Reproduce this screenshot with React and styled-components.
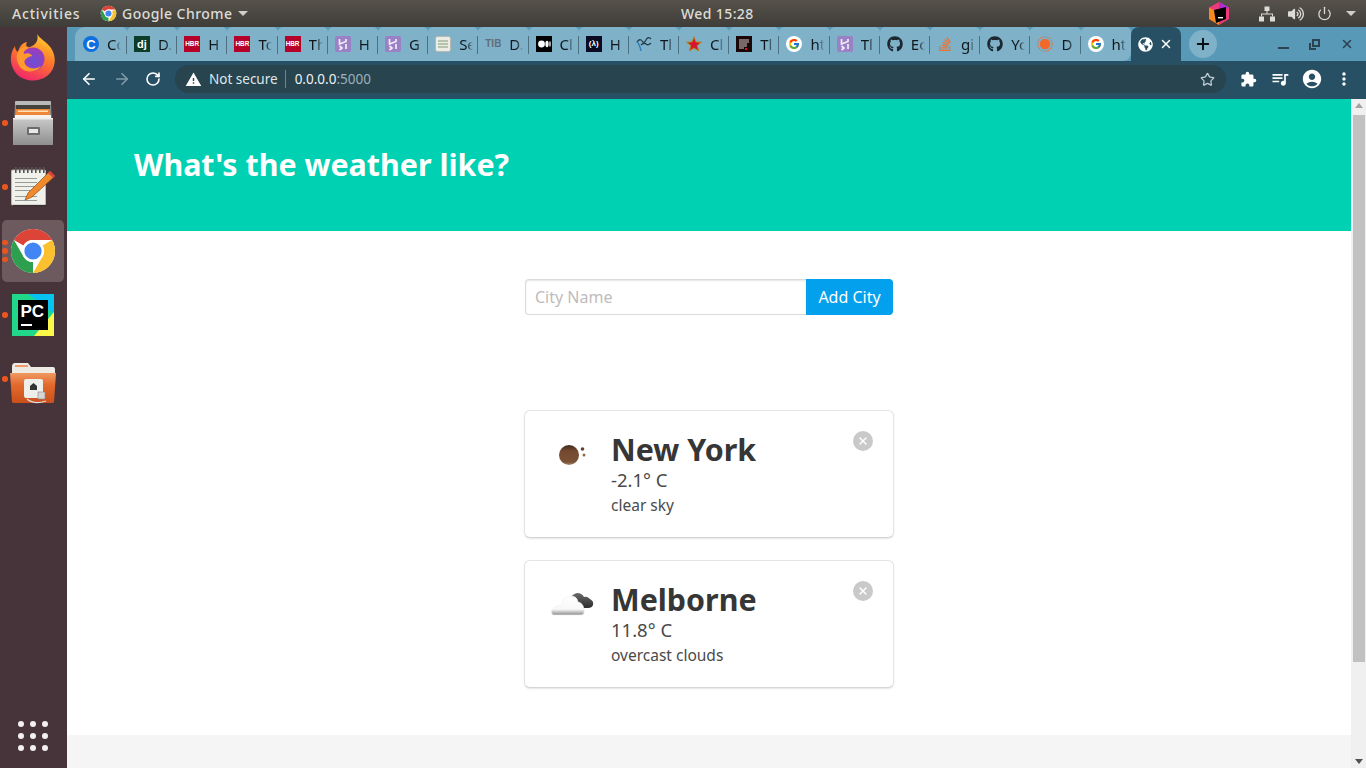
import React from "react";
import styled, { createGlobalStyle } from "styled-components";
import { ArrowLeft, ArrowRight, RotateCw, Star, Plus, X, Power } from "lucide-react";
import { FaGithub, FaStackOverflow, FaGlobeAmericas, FaVolumeUp } from "react-icons/fa";
import { FcGoogle } from "react-icons/fc";
import { MdExtension, MdQueueMusic, MdAccountCircle, MdMoreVert, MdWarning } from "react-icons/md";

const UI_FONT = `"Noto Sans", "Open Sans", sans-serif`;

const GlobalStyle = createGlobalStyle`
  html, body { margin: 0; padding: 0; height: 768px; overflow: hidden; }
  * { box-sizing: border-box; }
  body { font-family: ${UI_FONT}; color: #4a4a4a; }
`;

function ChromeLogo({ size }) {
  const sector = "M4.95 13 A22 22 0 0 1 43.05 13 H24 A11 11 0 0 0 14.47 18.5 Z";
  return (
    <svg width={size} height={size} viewBox="0 0 48 48">
      <circle cx="24" cy="24" r="22" fill="#fff" />
      <path d={sector} fill="#db4437" />
      <path d={sector} fill="#fbc02d" transform="rotate(120 24 24)" />
      <path d={sector} fill="#2e9e4f" transform="rotate(240 24 24)" />
      <circle cx="24" cy="24" r="11" fill="#fff" />
      <circle cx="24" cy="24" r="8.6" fill="#4285f4" />
    </svg>
  );
}

function FirefoxLogo() {
  return (
    <svg width="46" height="48" viewBox="0 2 46 48" overflow="visible">
      <defs>
        <linearGradient id="ffbody" x1="0.7" y1="0" x2="0.3" y2="1">
          <stop offset="0" stopColor="#ffd02e" />
          <stop offset="0.45" stopColor="#ff7a2a" />
          <stop offset="1" stopColor="#f0246c" />
        </linearGradient>
        <radialGradient id="ffglobe" cx="0.55" cy="0.6" r="0.6">
          <stop offset="0" stopColor="#6a4fd8" />
          <stop offset="1" stopColor="#a23bb5" />
        </radialGradient>
      </defs>
      <path d="M27 1 C30 6 37 9 41 15 C47 24 46 36 37 43 C28 50 12 49 5 39 C-1 30 0 20 5 13 C5 16 6 18 8 19 C9 14 12 10 17 9 C15 13 17 15 20 14 C26 12 29 7 27 1 Z" fill="url(#ffbody)" />
      <circle cx="23" cy="26" r="11.5" fill="url(#ffglobe)" />
      <path d="M7 21 C9 15 15 12 19 14 C15 16 13 19 14 21 C17 19 22 21 22 23 C17 24 13 27 15 31 C18 36 26 37 31 33 C27 39 16 41 10 34 C7 30 6 25 7 21 Z" fill="#ff9a2e" />
    </svg>
  );
}

function CabinetIcon() {
  return (
    <svg width="42" height="46" viewBox="0 0 42 46">
      <defs>
        <linearGradient id="cabfront" x1="0" y1="0" x2="0" y2="1">
          <stop offset="0" stopColor="#c9c9c9" />
          <stop offset="1" stopColor="#8f8f8f" />
        </linearGradient>
      </defs>
      <path d="M3 3 Q3 1 5 1 H37 Q39 1 39 3 L41 44 Q41 45 40 45 H2 Q1 45 1 44 Z" fill="#8a8a8a" />
      <rect x="3" y="1" width="36" height="4" rx="1" fill="#b9b9b9" />
      <rect x="4" y="5" width="34" height="15" fill="#45413d" />
      <rect x="4" y="9" width="34" height="6" fill="#ee8836" />
      <rect x="6" y="10.5" width="30" height="1.5" fill="#fde1b8" />
      <rect x="3" y="15" width="36" height="3" fill="#f6f3ee" />
      <rect x="1" y="18" width="40" height="27" rx="1" fill="url(#cabfront)" />
      <rect x="1" y="18" width="40" height="1.5" fill="#ececec" />
      <rect x="15" y="27" width="13" height="8" rx="1" fill="#6c6c6c" />
      <rect x="17" y="29" width="9" height="4" fill="#e8e8e8" />
    </svg>
  );
}

function NotesIcon() {
  return (
    <svg width="46" height="40" viewBox="0 0 46 40">
      <rect x="1.5" y="3" width="34" height="35" rx="1" fill="#f1f1ec" stroke="#b9b9b4" />
      <rect x="3" y="38" width="33" height="1.6" fill="#3a3030" />
      {[5, 9, 13, 17, 21, 25, 29, 33].map((x) => (
        <rect key={x} x={x} y="0" width="1.6" height="6" fill="#555" />
      ))}
      {[11, 15, 19, 23, 29, 33].map((y) => (
        <rect key={y} x="5" y={y} width={y % 2 ? 22 : 16} height="1" fill="#9a9a96" />
      ))}
      <path d="M40 4 L45 9 L22 30 L15 33 L18 26 Z" fill="#f08a2c" stroke="#8b4a12" strokeWidth="0.7" />
      <path d="M40 4 L45 9 L43 11 L38 6 Z" fill="#d8434a" />
    </svg>
  );
}

function PyCharmIcon() {
  return (
    <svg width="42" height="42" viewBox="0 0 42 42">
      <rect width="42" height="42" fill="#21d789" />
      <path d="M16 0 H42 V20 Z" fill="#07c3f2" />
      <path d="M42 18 V42 H22 Z" fill="#fcf84a" />
      <rect x="6" y="6" width="30" height="30" fill="#000" />
      <text x="8.5" y="23" fontFamily="Liberation Sans, sans-serif" fontWeight="700" fontSize="17" fill="#fff">PC</text>
      <rect x="9" y="30" width="11" height="2" fill="#fff" />
    </svg>
  );
}

function FolderIcon() {
  return (
    <svg width="46" height="42" viewBox="0 -4 46 42" overflow="visible">
      <defs>
        <linearGradient id="folderfill" x1="0" y1="0" x2="0" y2="1">
          <stop offset="0" stopColor="#f09a62" />
          <stop offset="0.4" stopColor="#e3692c" />
          <stop offset="1" stopColor="#c9501c" />
        </linearGradient>
      </defs>
      <path d="M2 5 Q2 1 5 1 H18 L21 5 H43 Q45 5 45 7 V14 H2 Z" fill="#eeeae4" />
      <rect x="5" y="3" width="13" height="2" fill="#ee9c6c" />
      <path d="M0 11 H46 L44 40 Q44 41 42 41 H4 Q2 41 2 40 Z" fill="url(#folderfill)" />
      <rect x="14" y="17" width="19" height="19" rx="2" fill="#eeeeea" />
      <path d="M20 28 V24 L23.5 21 L27 24 V28 Z" fill="#333" />
      <rect x="28" y="30" width="7" height="7" fill="#d6d6d6" stroke="#888" strokeWidth="0.6" />
      <path d="M17 37 Q24 43 36 39" fill="none" stroke="#ddd" strokeWidth="1.2" />
    </svg>
  );
}

function MoonIcon() {
  return (
    <svg width="28" height="22" viewBox="0 0 28 22">
      <defs>
        <linearGradient id="moonfill" x1="0" y1="0" x2="0" y2="1">
          <stop offset="0" stopColor="#3f2a1e" />
          <stop offset="0.3" stopColor="#74492f" />
          <stop offset="0.85" stopColor="#7a5236" />
          <stop offset="1" stopColor="#a5856c" />
        </linearGradient>
      </defs>
      <circle cx="11" cy="12" r="10" fill="url(#moonfill)" />
      <circle cx="24.5" cy="6" r="1.8" fill="#5f4230" />
      <circle cx="26" cy="12" r="1.5" fill="#8f6a4c" />
    </svg>
  );
}

function OvercastIcon() {
  return (
    <svg width="44" height="26" viewBox="0 0 44 26">
      <defs>
        <linearGradient id="cloudlight" x1="0" y1="0" x2="0" y2="1">
          <stop offset="0" stopColor="#ffffff" />
          <stop offset="0.7" stopColor="#f8f8f8" />
          <stop offset="1" stopColor="#8a8a8a" />
        </linearGradient>
        <linearGradient id="clouddark" x1="0" y1="0" x2="0" y2="1">
          <stop offset="0" stopColor="#6a6a6a" />
          <stop offset="1" stopColor="#2c2c2c" />
        </linearGradient>
      </defs>
      <path d="M20 10 Q21 3 27 2 Q32 2 34 6 Q37 5 40 8 Q44 10 43 14 Q42 17 38 17 H24 Z" fill="url(#clouddark)" />
      <path d="M3 24 Q-1 20 4 17 Q7 14 11 15 Q13 5 21 5 Q27 5 28 11 Q33 12 34 18 Q35 24 31 24 Z" fill="url(#cloudlight)" stroke="#efefef" strokeWidth="0.7" />
    </svg>
  );
}

function Heroku() {
  return (
    <svg width="16" height="16" viewBox="0 0 16 16">
      <rect width="16" height="16" rx="2" fill="#9a80c4" />
      <path d="M4.5 3 V8 L11 5.5 V3 M11 8 V13 M4.5 10 L7 12 L4.5 14" fill="none" stroke="#f1ecf8" strokeWidth="1.7" />
    </svg>
  );
}

const LabelBox = styled.span`
  width: 16px;
  height: 16px;
  display: flex;
  align-items: center;
  justify-content: center;
  flex: none;
  overflow: hidden;
  font-family: "Liberation Sans", sans-serif;
  font-weight: 700;
  line-height: 1;
  white-space: nowrap;
  border-radius: ${(p) => (p.$round ? "50%" : "0")};
  background: ${(p) => p.$bg || "transparent"};
  color: ${(p) => p.$fg || "#fff"};
  font-size: ${(p) => p.$size || 9}px;
`;

function Favicon({ kind }) {
  switch (kind) {
    case "coursera":
      return <LabelBox $round $bg="#0f6fde" $size={13}>C</LabelBox>;
    case "django":
      return <LabelBox $bg="#0c3c2a" $size={11}>dj</LabelBox>;
    case "hbr":
      return <LabelBox $bg="#b5002a" $size={6.4}>HBR</LabelBox>;
    case "heroku":
      return <Heroku />;
    case "doc":
      return (
        <svg width="16" height="16" viewBox="0 0 16 16">
          <rect x="0.5" y="0.5" width="15" height="15" rx="2" fill="#ecece6" stroke="#b8b8b0" />
          <path d="M3 5 H13 M3 8 H13 M3 11 H13" stroke="#7f9a72" strokeWidth="1.2" />
        </svg>
      );
    case "tib":
      return <LabelBox $fg="#5f6f79" $size={10}>TIB</LabelBox>;
    case "medium":
      return (
        <svg width="16" height="16" viewBox="0 0 16 16">
          <rect width="16" height="16" fill="#000" />
          <circle cx="5.5" cy="8" r="3.4" fill="#fff" />
          <ellipse cx="11" cy="8" rx="1.6" ry="3.2" fill="#fff" />
          <ellipse cx="14" cy="8" rx="0.7" ry="2.9" fill="#fff" />
        </svg>
      );
    case "fcc":
      return <LabelBox $bg="#0a0a23" $size={8}>(λ)</LabelBox>;
    case "wave":
      return (
        <svg width="16" height="16" viewBox="0 0 16 16" fill="none">
          <path d="M1 6 Q4 2 6 5 T10 4 T15 3" stroke="#27424f" strokeWidth="1.3" />
          <path d="M5 9 Q8 6 10 8 T15 7" stroke="#27424f" strokeWidth="1.3" />
          <path d="M1 6 Q4 9 5 15" stroke="#2a7fb8" strokeWidth="1.4" />
        </svg>
      );
    case "star":
      return (
        <svg width="16" height="16" viewBox="0 0 16 16">
          <path d="M8 .8 L10 6 L15.5 6.2 L11.2 9.6 L12.7 15 L8 12 L3.3 15 L4.8 9.6 L.5 6.2 L6 6 Z" fill="#d8152f" stroke="#b08a1e" strokeWidth="1" />
        </svg>
      );
    case "make":
      return (
        <svg width="16" height="16" viewBox="0 0 16 16">
          <rect width="16" height="16" fill="#1b0608" />
          <path d="M3 4 H13 M3 6 H13 M3 8 H11 M3 10 H11 M3 12 H8" stroke="#d8caca" strokeWidth="1" />
          <rect x="9" y="12" width="2" height="2" fill="#d8152f" />
        </svg>
      );
    case "google":
      return (
        <GoogleBadge>
          <FcGoogle size={12} />
        </GoogleBadge>
      );
    case "github":
      return <FaGithub size={16} color="#1d2730" />;
    case "so":
      return <FaStackOverflow size={16} color="#f0702c" />;
    case "sun":
      return (
        <svg width="16" height="16" viewBox="0 0 16 16">
          <circle cx="8" cy="8" r="5.2" fill="#f4682a" />
          <circle cx="8" cy="8" r="7.2" fill="none" stroke="#f4682a" strokeWidth="1.2" strokeDasharray="1.2 1.2" />
        </svg>
      );
    default:
      return null;
  }
}

const TABS = [
  ["coursera", "Cc"], ["django", "D."], ["hbr", "H"], ["hbr", "To"], ["hbr", "Th"],
  ["heroku", "H"], ["heroku", "G"], ["doc", "Se"], ["tib", "D."], ["medium", "Cl"],
  ["fcc", "H"], ["wave", "Tl"], ["star", "Cl"], ["make", "Tl"], ["google", "ht"],
  ["heroku", "Tl"], ["github", "Ec"], ["so", "gi"], ["github", "Yc"], ["sun", "D"],
  ["google", "ht"],
];

const CITIES = [
  { name: "New York", temp: "-2.1° C", desc: "clear sky", Icon: MoonIcon },
  { name: "Melborne", temp: "11.8° C", desc: "overcast clouds", Icon: OvercastIcon },
];

const DOCK = [
  { id: "firefox", node: <FirefoxLogo />, dots: 0 },
  { id: "files", node: <CabinetIcon />, dots: 1 },
  { id: "notes", node: <NotesIcon />, dots: 1 },
  { id: "chrome", node: <ChromeLogo size={48} />, dots: 3, active: true },
  { id: "pycharm", node: <PyCharmIcon />, dots: 1 },
  { id: "folder", node: <FolderIcon />, dots: 1 },
];

export default function App() {
  return (
    <Desktop>
      <GlobalStyle />
      <TopBar>
        <TopLeft>
          <Activities>Activities</Activities>
          <AppMenu>
            <ChromeLogo size={17} />
            <span>Google Chrome</span>
            <Caret />
          </AppMenu>
        </TopLeft>
        <Clock>Wed 15:28</Clock>
        <TopRight>
          <svg width="20" height="23" viewBox="0 0 20 23">
            <path d="M10 0 L20 5.5 V17 L10 23 L0 17 V5.5 Z" fill="#ee3a7a" />
            <path d="M0 5.5 L10 11 V23 L0 17 Z" fill="#f58a1f" />
            <path d="M10 0 L20 5.5 L10 11 Z" fill="#b02fd0" />
            <path d="M5 8 L17 5 V17 L7 21 Z" fill="#000" />
            <rect x="9" y="15" width="5" height="1.4" fill="#fff" />
          </svg>
          <TrayGroup>
            <svg width="16" height="16" viewBox="0 0 16 16" fill="#dcdcd6">
              <rect x="5.5" y="0.5" width="5" height="4.5" />
              <rect x="0" y="10.5" width="5" height="5" />
              <rect x="11" y="10.5" width="5" height="5" />
              <path d="M7.5 5 H8.5 V7.5 H14 V10.5 H13 V8.5 H3 V10.5 H2 V7.5 H7.5 Z" />
            </svg>
            <FaVolumeUp size={16} color="#dcdcd6" />
            <Power size={15} color="#dcdcd6" strokeWidth={2} />
            <Caret />
          </TrayGroup>
        </TopRight>
      </TopBar>
      <Workspace>
        <Dock>
          {DOCK.map((item) => (
            <DockItem key={item.id}>
              <DockTile $active={item.active}>{item.node}</DockTile>
              {item.dots > 0 && (
                <DotColumn>
                  {Array.from({ length: item.dots }).map((_, i) => (
                    <RunDot key={i} />
                  ))}
                </DotColumn>
              )}
            </DockItem>
          ))}
          <AppGrid>
            {Array.from({ length: 9 }).map((_, i) => (
              <GridDot key={i} />
            ))}
          </AppGrid>
        </Dock>
        <Browser>
          <TabStrip>
            {TABS.map(([kind, title], i) => (
              <Tab key={i} $first={i === 0} $last={i === TABS.length - 1}>
                <Favicon kind={kind} />
                <TabTitle>{title}</TabTitle>
              </Tab>
            ))}
            <ActiveTab>
              <FaGlobeAmericas size={15} color="#fff" />
              <X size={14} color="#fff" strokeWidth={2.5} />
            </ActiveTab>
            <NewTab>
              <Plus size={18} color="#0a0f12" strokeWidth={2.6} />
            </NewTab>
            <WindowButtons>
              <MinimizeGlyph />
              <svg width="11" height="11" viewBox="0 0 11 11" fill="none" stroke="#2c4452" strokeWidth="2">
                <rect x="4" y="1" width="6" height="6" />
                <path d="M1 4 V10 H7" />
              </svg>
              <X size={14} color="#2c4452" strokeWidth={2.8} />
            </WindowButtons>
          </TabStrip>
          <Toolbar>
            <NavButtons>
              <ArrowLeft size={18} color="#fff" strokeWidth={2.2} />
              <ArrowRight size={18} color="#7f9aa8" strokeWidth={2.2} />
              <RotateCw size={16} color="#fff" strokeWidth={2.4} />
            </NavButtons>
            <Omnibox>
              <SecurityChip>
                <MdWarning size={17} color="#fff" />
                <span>Not secure</span>
              </SecurityChip>
              <Address>
                0.0.0.0<AddressPort>:5000</AddressPort>
              </Address>
              <Star size={15} color="#c4d0d6" strokeWidth={2} />
            </Omnibox>
            <ToolButtons>
              <ToolButton><MdExtension size={17} color="#fff" /></ToolButton>
              <ToolButton><MdQueueMusic size={20} color="#fff" /></ToolButton>
              <ToolButton><MdAccountCircle size={22} color="#fff" /></ToolButton>
              <ToolButton><MdMoreVert size={20} color="#fff" /></ToolButton>
            </ToolButtons>
          </Toolbar>
          <Viewport>
            <Page>
              <Hero>
                <HeroTitle>What's the weather like?</HeroTitle>
              </Hero>
              <Section>
                <CityForm>
                  <CityInput placeholder="City Name" />
                  <AddButton>Add City</AddButton>
                </CityForm>
                <CardList>
                  {CITIES.map(({ name, temp, desc, Icon }) => (
                    <Card key={name}>
                      <IconCell>
                        <Icon />
                      </IconCell>
                      <CardBody>
                        <CityTitle>{name}</CityTitle>
                        <Temperature>{temp}</Temperature>
                        <Description>{desc}</Description>
                      </CardBody>
                      <DeleteButton>
                        <X size={12} color="#fff" strokeWidth={3} />
                      </DeleteButton>
                    </Card>
                  ))}
                </CardList>
              </Section>
              <Footer />
            </Page>
            <Scrollbar>
              <ScrollArrow $up />
              <ScrollThumb />
              <ScrollArrow />
            </Scrollbar>
          </Viewport>
        </Browser>
      </Workspace>
    </Desktop>
  );
}

const Desktop = styled.div`
  width: 1366px;
  height: 768px;
  display: flex;
  flex-direction: column;
  overflow: hidden;
  background: #fff;
`;

const TopBar = styled.header`
  height: 27px;
  flex: none;
  display: grid;
  grid-template-columns: 681px auto 1fr;
  align-items: center;
  background: linear-gradient(#56524b, #3f3d39);
  color: #dcdcd6;
  font-size: 14px;
  font-weight: 500;
`;

const TopLeft = styled.div`
  display: flex;
  align-items: center;
  padding-left: 12px;
`;

const Activities = styled.span`
  width: 88px;
  letter-spacing: 0.8px;
`;

const AppMenu = styled.div`
  display: flex;
  align-items: center;
  gap: 5px;
  letter-spacing: 0.45px;
`;

const Caret = styled.i`
  display: block;
  margin-left: 1px;
  border-left: 5px solid transparent;
  border-right: 5px solid transparent;
  border-top: 5px solid #cfcfc9;
`;

const Clock = styled.div`
  letter-spacing: 0.4px;
`;

const TopRight = styled.div`
  display: flex;
  align-items: center;
  justify-content: flex-end;
  padding-right: 10px;
`;

const TrayGroup = styled.div`
  display: flex;
  align-items: center;
  gap: 13px;
  margin-left: 30px;
`;

const Workspace = styled.div`
  flex: 1;
  display: flex;
  min-height: 0;
`;

const Dock = styled.nav`
  width: 67px;
  flex: none;
  display: flex;
  flex-direction: column;
  background: #47343a;
`;

const DockItem = styled.div`
  position: relative;
  height: 64px;
  flex: none;
  display: flex;
  align-items: center;
  justify-content: center;
  padding-right: 1px;
`;

const DockTile = styled.div`
  width: 62px;
  height: 62px;
  display: flex;
  align-items: center;
  justify-content: center;
  border-radius: 5px;
  background: ${(p) => (p.$active ? "#6c5a5e" : "transparent")};
`;

const DotColumn = styled.div`
  position: absolute;
  left: 2px;
  top: 0;
  bottom: 0;
  display: flex;
  flex-direction: column;
  justify-content: center;
  gap: 3px;
`;

const RunDot = styled.i`
  display: block;
  width: 5.5px;
  height: 5.5px;
  border-radius: 50%;
  background: #e95420;
`;

const AppGrid = styled.div`
  margin-top: auto;
  margin-bottom: 17px;
  margin-left: 18px;
  display: grid;
  grid-template-columns: repeat(3, 6px);
  gap: 6px;
`;

const GridDot = styled.i`
  width: 6px;
  height: 6px;
  border-radius: 50%;
  background: #f2f0f0;
`;

const Browser = styled.main`
  flex: 1;
  min-width: 0;
  display: flex;
  flex-direction: column;
`;

const TabStrip = styled.div`
  height: 34px;
  flex: none;
  display: flex;
  padding-left: 8px;
  background: #5899b7;
`;

const Tab = styled.div`
  position: relative;
  width: ${(p) => (p.$first ? "52px" : "50.2px")};
  flex: none;
  display: flex;
  align-items: center;
  gap: 8px;
  padding-left: ${(p) => (p.$first ? "8px" : "7px")};
  background: #7fb1c9;
  border-radius: ${(p) => (p.$first ? "10px 5px 0 0" : p.$last ? "5px 5px 8px 0" : "5px 5px 0 0")};

  &::after {
    content: "";
    display: ${(p) => (p.$last ? "none" : "block")};
    position: absolute;
    right: 0;
    top: 9px;
    width: 1px;
    height: 18px;
    background: #4d6f80;
  }
`;

const TabTitle = styled.span`
  width: 14px;
  overflow: hidden;
  white-space: nowrap;
  font-size: 15px;
  color: #10181d;
  -webkit-mask-image: linear-gradient(to right, #000 55%, transparent);
  mask-image: linear-gradient(to right, #000 55%, transparent);
`;

const ActiveTab = styled.div`
  width: 50px;
  flex: none;
  display: flex;
  align-items: center;
  gap: 6px;
  padding-left: 7px;
  background: #275064;
  border-radius: 8px 8px 0 0;
`;

const NewTab = styled.div`
  width: 28px;
  height: 28px;
  margin: 3px 0 0 8px;
  flex: none;
  display: flex;
  align-items: center;
  justify-content: center;
  border-radius: 50%;
  background: #7fb1c9;
`;

const WindowButtons = styled.div`
  margin-left: auto;
  width: 120px;
  padding: 0 12px 0 32px;
  display: flex;
  align-items: center;
  justify-content: space-between;
`;

const MinimizeGlyph = styled.i`
  display: block;
  width: 11px;
  height: 2px;
  margin-top: 8px;
  background: #2c4452;
`;

const Toolbar = styled.div`
  height: 38px;
  flex: none;
  display: flex;
  align-items: center;
  padding-bottom: 2px;
  background: #275064;
`;

const NavButtons = styled.div`
  width: 108px;
  padding: 0 14px 0 13px;
  flex: none;
  display: flex;
  align-items: center;
  justify-content: space-between;
`;

const Omnibox = styled.div`
  width: 1051px;
  height: 28px;
  flex: none;
  display: flex;
  align-items: center;
  padding: 0 11px 0 10px;
  border-radius: 14px;
  background: #27444f;
  font-size: 13.5px;
`;

const SecurityChip = styled.div`
  display: flex;
  align-items: center;
  gap: 7px;
  padding-right: 7px;
  height: 18px;
  border-right: 1px solid #6e8590;
  color: #dfe6ea;
`;

const Address = styled.div`
  flex: 1;
  padding-left: 9px;
  color: #eef2f4;
`;

const AddressPort = styled.span`
  color: #9db0ba;
`;

const ToolButtons = styled.div`
  padding-left: 6px;
  display: grid;
  grid-template-columns: repeat(4, 32px);
`;

const ToolButton = styled.div`
  height: 28px;
  display: flex;
  align-items: center;
  justify-content: center;
`;

const Viewport = styled.div`
  flex: 1;
  min-height: 0;
  display: flex;
`;

const Page = styled.div`
  flex: 1;
  min-width: 0;
  display: flex;
  flex-direction: column;
  background: #f5f5f5;
`;

const Hero = styled.section`
  height: 132px;
  flex: none;
  display: flex;
  align-items: center;
  padding-left: 67px;
  background: #00d1b2;
`;

const HeroTitle = styled.h1`
  margin: 0;
  font-size: 30.4px;
  font-weight: 700;
  line-height: 1.125;
  color: #fff;
`;

const Section = styled.section`
  flex: none;
  height: 504px;
  padding-top: 48px;
  display: flex;
  flex-direction: column;
  align-items: center;
  background: #fff;
`;

const CityForm = styled.form`
  width: 368px;
  height: 36px;
  display: flex;
`;

const CityInput = styled.input`
  flex: 1;
  min-width: 0;
  height: 36px;
  padding: 0 9px;
  border: 1px solid #dbdbdb;
  border-right: 0;
  border-radius: 4px 0 0 4px;
  box-shadow: inset 0 1px 2px rgba(10, 10, 10, 0.1);
  font-family: ${UI_FONT};
  font-size: 16px;
  outline: none;

  &::placeholder {
    color: #c0bcbc;
    opacity: 1;
  }
`;

const AddButton = styled.button`
  width: 87px;
  height: 36px;
  flex: none;
  padding: 0;
  border: 0;
  border-radius: 0 4px 4px 0;
  background: #02a0ed;
  color: #fff;
  font-family: ${UI_FONT};
  font-size: 16px;
`;

const CardList = styled.div`
  margin-top: 95px;
  display: flex;
  flex-direction: column;
  gap: 22px;
`;

const Card = styled.article`
  width: 370px;
  height: 128px;
  display: flex;
  align-items: flex-start;
  padding: 20px 20px 0 0;
  border: 1px solid #e4e4e4;
  border-bottom-color: #d6d6d6;
  border-radius: 6px;
  background: #fff;
  box-shadow: 0 1px 2px rgba(10, 10, 10, 0.1);
`;

const IconCell = styled.div`
  width: 86px;
  height: 46px;
  flex: none;
  display: flex;
  align-items: center;
  justify-content: center;
  padding-left: 8px;
`;

const CardBody = styled.div`
  flex: 1;
  min-width: 0;
  color: #4a4a4a;
`;

const CityTitle = styled.h2`
  margin: 0;
  font-size: 30.4px;
  font-weight: 700;
  line-height: 38px;
  color: #363636;
`;

const Temperature = styled.div`
  font-size: 18.5px;
  line-height: 22px;
`;

const Description = styled.div`
  font-size: 15.5px;
  line-height: 28px;
`;

const DeleteButton = styled.div`
  width: 20px;
  height: 20px;
  flex: none;
  display: flex;
  align-items: center;
  justify-content: center;
  border-radius: 50%;
  background: #c9c9c9;
`;

const Footer = styled.footer`
  flex: 1;
  background: #f5f5f5;
`;

const Scrollbar = styled.div`
  width: 15px;
  flex: none;
  display: flex;
  flex-direction: column;
  align-items: center;
  background: #f0f0f0;
`;

const ScrollArrow = styled.i`
  display: block;
  width: 0;
  height: 0;
  margin: ${(p) => (p.$up ? "4px 0 7px" : "auto 0 4px")};
  border-left: 4px solid transparent;
  border-right: 4px solid transparent;
  ${(p) => (p.$up ? "border-bottom: 5px solid #a3a3a3;" : "border-top: 5px solid #505050;")}
`;

const ScrollThumb = styled.div`
  width: 12px;
  height: 547px;
  margin-left: 1px;
  background: #c1c1c1;
`;

const GoogleBadge = styled.span`
  width: 16px;
  height: 16px;
  flex: none;
  display: flex;
  align-items: center;
  justify-content: center;
  border-radius: 50%;
  background: #fff;
`;
